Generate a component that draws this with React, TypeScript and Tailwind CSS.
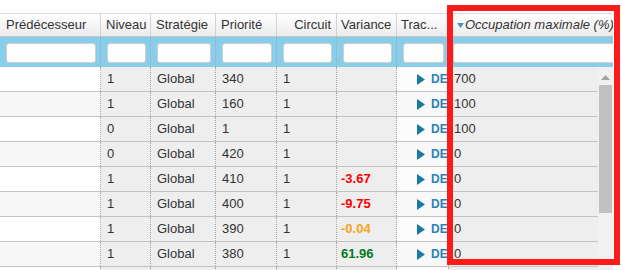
import React from "react";

const cols = [101, 50, 65, 61, 60, 60, 52];

type Row = {
  niveau: string;
  prio: string;
  strat: string;
  circuit: string;
  variance?: { v: string; c: string };
  occ: string;
  trac: boolean;
};

const rows: Row[] = [
  { niveau: "1", strat: "Global", circuit: "1", prio: "340", occ: "700", trac: true },
  { niveau: "1", strat: "Global", circuit: "1", prio: "160", occ: "100", trac: true },
  { niveau: "0", strat: "Global", circuit: "1", prio: "1", occ: "100", trac: true },
  { niveau: "0", strat: "Global", circuit: "1", prio: "420", occ: "0", trac: true },
  { niveau: "1", strat: "Global", circuit: "1", prio: "410", variance: { v: "-3.67", c: "text-[#ff0000]" }, occ: "0", trac: true },
  { niveau: "1", strat: "Global", circuit: "1", prio: "400", variance: { v: "-9.75", c: "text-[#ff0000]" }, occ: "0", trac: true },
  { niveau: "1", strat: "Global", circuit: "1", prio: "390", variance: { v: "-0.04", c: "text-[#f7a21b]" }, occ: "0", trac: true },
  { niveau: "1", strat: "Global", circuit: "1", prio: "380", variance: { v: "61.96", c: "text-[#007a1f]" }, occ: "0", trac: true },
  { niveau: "", strat: "", circuit: "", prio: "", occ: "", trac: false },
];

function Play() {
  return (
    <svg width="8" height="11" viewBox="0 0 8 11" className="shrink-0">
      <polygon points="0,0 8,5.5 0,11" fill="#1779a3" />
    </svg>
  );
}

export default function App() {
  const dot = "border-r border-dotted border-[#a8a8a8]";
  return (
    <div
      className="relative w-[622px] h-[270px] overflow-hidden bg-white text-[13px] text-[#333]"
      style={{ fontFamily: '"Liberation Sans", Arial, sans-serif' }}
    >
      <div className="pt-[13px] w-[613px]">
        {/* header */}
        <div className="flex h-[24px] border-t border-b border-t-[#dcdcdc] border-b-[#c4c4c4] bg-linear-to-b from-white to-[#ebebeb]">
          <div className="w-[101px] shrink-0 pl-[6px] flex items-center border-r border-[#d2d2d2]">Prédécesseur</div>
          <div className="w-[50px] shrink-0 pl-[5px] flex items-center border-r border-[#d2d2d2]">Niveau</div>
          <div className="w-[65px] shrink-0 pl-[5px] flex items-center border-r border-[#d2d2d2]">Stratégie</div>
          <div className="w-[61px] shrink-0 pl-[5px] flex items-center border-r border-[#d2d2d2]">Priorité</div>
          <div className="w-[60px] shrink-0 pr-[5px] flex items-center justify-end border-r border-[#d2d2d2]">Circuit</div>
          <div className="w-[60px] shrink-0 pl-[4px] flex items-center border-r border-[#d2d2d2]">Variance</div>
          <div className="w-[52px] shrink-0 pl-[4px] flex items-center border-r border-[#d2d2d2] whitespace-nowrap overflow-hidden">Trac...</div>
          <div className="flex-1 pl-[8px] flex items-center whitespace-nowrap overflow-hidden italic">
            <svg width="7" height="5" viewBox="0 0 7 5" className="mr-[1px] mt-[1px] shrink-0">
              <polygon points="0,0 7,0 3.5,5" fill="#4b8fc9" />
            </svg>
            Occupation maximale (%)
          </div>
        </div>
        {/* filter row */}
        <div className="flex h-[30px] bg-[#88cdea]">
          {cols.map((w, i) => (
            <div key={i} className={`shrink-0 pt-[6px] pl-[6px] pr-[4px] ${dot}`} style={{ width: w }}>
              <div className="h-[20px] w-full bg-white border border-[#cfcfcf] rounded-[3px]" />
            </div>
          ))}
          <div className="flex-1 pt-[6px] pl-[4px] overflow-hidden">
            <div className="h-[20px] w-[200px] bg-white border border-[#cfcfcf] rounded-[3px]" />
          </div>
        </div>
        {/* body */}
        <div className="flex">
          <div className="w-[598px] shrink-0">
            {rows.map((r, i) => {
              const alt = i % 2 === 1 ? "bg-[#f7f7f7]" : "bg-white";
              const altT = i % 2 === 1 ? "bg-[#f8f8f8]" : "bg-[#fcfcfc]";
              return (
                <div key={i} className="flex h-[25px] border-b border-[#c2c2c2]">
                  <div className={`w-[101px] shrink-0 ${alt} ${dot}`} />
                  <div className={`w-[50px] shrink-0 bg-[#eeeeee] pl-[6px] flex items-center ${dot}`}>{r.niveau}</div>
                  <div className={`w-[65px] shrink-0 bg-[#eeeeee] pl-[6px] flex items-center ${dot}`}>{r.strat}</div>
                  <div className={`w-[61px] shrink-0 bg-[#eeeeee] pl-[6px] flex items-center ${dot}`}>{r.prio}</div>
                  <div className={`w-[60px] shrink-0 bg-[#eeeeee] pl-[6px] flex items-center ${dot}`}>{r.circuit}</div>
                  <div className={`w-[60px] shrink-0 bg-[#eeeeee] pl-[4px] flex items-center ${dot}`}>
                    {r.variance && <span className={`font-bold ${r.variance.c}`}>{r.variance.v}</span>}
                  </div>
                  <div className={`w-[52px] shrink-0 ${altT} pl-[20px] flex items-center overflow-hidden whitespace-nowrap ${dot}`}>
                    {r.trac && (
                      <>
                        <Play />
                        <span className="ml-[6px] text-[12px] font-bold text-[#2a82b8]">DE</span>
                      </>
                    )}
                  </div>
                  <div className="flex-1 bg-[#eeeeee] pl-[5px] flex items-center">{r.occ}</div>
                </div>
              );
            })}
          </div>
          {/* scrollbar */}
          <div className="w-[15px] shrink-0 h-[210px] bg-[#f1f1f1] flex flex-col items-center">
            <svg width="9" height="5" viewBox="0 0 9 5" className="mt-[8px]">
              <polygon points="0,5 9,5 4.5,0" fill="#a3a3a3" />
            </svg>
            <div className="mt-[5px] w-[13px] h-[128px] bg-[#c1c1c1]" />
          </div>
        </div>
      </div>
      {/* highlight box */}
      <div className="absolute left-[447px] top-[5px] w-[173px] h-[260px] border-[6px] border-[#ff1a1a]" />
    </div>
  );
}
